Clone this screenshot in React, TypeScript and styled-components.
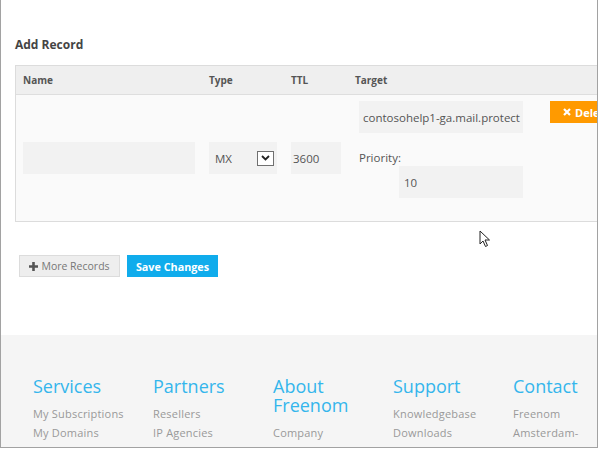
import React, { FC } from 'react'
import styled, { createGlobalStyle } from 'styled-components'

const GlobalStyle = createGlobalStyle`
    html, body {
        margin: 0;
        padding: 0;
        background: #fff;
        font-family: "Open Sans", "Liberation Sans", sans-serif;
    }
`

const Frame = styled.div`
    position: relative;
    width: 596px;
    height: 447px;
    border-left: 1px solid #a2a2a2;
    border-right: 1px solid #a2a2a2;
    border-bottom: 1px solid #a2a2a2;
    overflow: hidden;
    display: flex;
    flex-direction: column;
`

const Main = styled.section`
    padding: 37px 0 0 14px;
    height: 335px;
    flex-shrink: 0;
    box-sizing: border-box;
`

const Title = styled.h2`
    margin: 0 0 12px;
    font-size: 12px;
    line-height: 16px;
    font-weight: 700;
    color: #444;
`

const Table = styled.div`
    width: 640px;
    border: 1px solid #dcdcdc;
    border-right: none;
    background: #fafafa;
`

const Row = styled.div<{ $head?: boolean }>`
    display: grid;
    grid-template-columns: 186px 82px 64px 195px 1fr;
    align-items: center;
    height: ${p => (p.$head ? '28px' : '126px')};
    background: ${p => (p.$head ? '#efefef' : '#fafafa')};
    border-bottom: ${p => (p.$head ? '1px solid #dedede' : 'none')};
`

const HeadCell = styled.div`
    padding-left: 7px;
    font-size: 10px;
    font-weight: 700;
    color: #555;
`

const Cell = styled.div<{ $top?: boolean }>`
    padding-left: 7px;
    align-self: ${p => (p.$top ? 'start' : 'center')};
    padding-top: ${p => (p.$top ? '6px' : '0')};
`

const Field = styled.div<{ $w: number; $indent?: number }>`
    width: ${p => p.$w}px;
    height: 32px;
    margin-left: ${p => p.$indent ?? 0}px;
    background: #f2f2f2;
    display: flex;
    align-items: center;
    padding-left: ${p => (p.$indent ? 5 : 4)}px;
    box-sizing: border-box;
    font-size: 11.5px;
    color: #555;
    white-space: nowrap;
    overflow: hidden;
`

const Select = styled(Field)`
    justify-content: space-between;
    padding: 0 3px 0 6px;
`

const DropBox = styled.span`
    width: 15px;
    height: 13px;
    border: 1px solid #707070;
    background: #fff;
    display: flex;
    align-items: center;
    justify-content: center;
`

const TargetWrap = styled.div`
    padding-left: 4px;
`

const Label = styled.div`
    font-size: 11.5px;
    color: #555;
    margin: 17px 0 0;
    line-height: 16px;
`

const DeleteButton = styled.button`
    display: flex;
    align-items: center;
    gap: 4px;
    height: 22px;
    width: 80px;
    padding: 0 0 0 13px;
    border: none;
    background: #ff9a00;
    color: #fff;
    font-family: inherit;
    font-size: 11px;
    font-weight: 700;
`

const Actions = styled.div`
    display: flex;
    gap: 7px;
    margin: 33px 0 0 4px;
`

const Button = styled.button<{ $primary?: boolean }>`
    width: ${p => (p.$primary ? '91px' : '101px')};
    height: 22px;
    display: flex;
    align-items: center;
    justify-content: center;
    gap: 3px;
    padding: 0;
    border: 1px solid ${p => (p.$primary ? '#10acec' : '#dcdcdc')};
    background: ${p => (p.$primary ? '#10acec' : '#eeeeee')};
    color: ${p => (p.$primary ? '#fff' : '#777')};
    font-family: inherit;
    font-size: ${p => (p.$primary ? '10.8px' : '10.5px')};
    font-weight: ${p => (p.$primary ? 700 : 400)};
`

const Footer = styled.footer`
    flex: 1;
    background: #f5f5f5;
    padding: 42px 0 0 32px;
    display: flex;
    gap: 20px;
`

const Column = styled.div`
    width: 100px;
    flex-shrink: 0;
`

const ColTitle = styled.h3`
    margin: 0 0 8px;
    font-size: 18px;
    line-height: 19px;
    font-weight: 400;
    color: #34b6ec;
`

const Link = styled.div`
    font-size: 11px;
    line-height: 19px;
    color: #999;
    letter-spacing: 0.2px;
    white-space: nowrap;
`

const Cursor = styled.svg`
    position: absolute;
    left: 478px;
    top: 230px;
`

const columns: { title: string; links: string[] }[] = [
    { title: 'Services', links: ['My Subscriptions', 'My Domains', 'Register a New Domain'] },
    { title: 'Partners', links: ['Resellers', 'IP Agencies', 'Developers'] },
    { title: 'About Freenom', links: ['Company', 'Press'] },
    { title: 'Support', links: ['Knowledgebase', 'Downloads', 'Report Abuse'] },
    { title: 'Contact', links: ['Freenom', 'Amsterdam-', 'Netherlands'] },
]

const App: FC = () => {
    return (
        <>
            <GlobalStyle />
            <Frame>
                <Main>
                    <Title>Add Record</Title>
                    <Table>
                        <Row $head>
                            <HeadCell>Name</HeadCell>
                            <HeadCell>Type</HeadCell>
                            <HeadCell>TTL</HeadCell>
                            <HeadCell>Target</HeadCell>
                            <HeadCell />
                        </Row>
                        <Row>
                            <Cell><Field $w={172} /></Cell>
                            <Cell>
                                <Select $w={68}>
                                    MX
                                    <DropBox>
                                        <svg width="9" height="6" viewBox="0 0 9 6">
                                            <path d="M1 1l3.5 3.5L8 1" fill="none" stroke="#222" strokeWidth="1.8" />
                                        </svg>
                                    </DropBox>
                                </Select>
                            </Cell>
                            <Cell><Field $w={50} style={{ paddingLeft: 2 }}>3600</Field></Cell>
                            <Cell $top>
                                <TargetWrap>
                                    <Field $w={164}>contosohelp1-ga.mail.protect</Field>
                                    <Label>Priority:</Label>
                                    <Field $w={124} $indent={40}>10</Field>
                                </TargetWrap>
                            </Cell>
                            <Cell $top>
                                <DeleteButton>
                                    <svg width="8" height="8" viewBox="0 0 8 8">
                                        <path d="M1 1l6 6M7 1L1 7" stroke="#fff" strokeWidth="2.2" />
                                    </svg>
                                    Delete
                                </DeleteButton>
                            </Cell>
                        </Row>
                    </Table>
                    <Actions>
                        <Button>
                            <svg width="9" height="9" viewBox="0 0 9 9">
                                <path d="M4.5 0v9M0 4.5h9" stroke="#555" strokeWidth="2.6" />
                            </svg>
                            More Records
                        </Button>
                        <Button $primary>Save Changes</Button>
                    </Actions>
                </Main>
                <Footer>
                    {columns.map(c => (
                        <Column key={c.title}>
                            <ColTitle>{c.title}</ColTitle>
                            {c.links.map(l => <Link key={l}>{l}</Link>)}
                        </Column>
                    ))}
                </Footer>
                <Cursor width="12" height="18" viewBox="0 0 12 18">
                    <path d="M1 1v13l3-3 2.5 5.5 2-1L6 10h4.5z" fill="#fff" stroke="#222" strokeWidth="1" strokeLinejoin="round" />
                </Cursor>
            </Frame>
        </>
    )
}

export default App
